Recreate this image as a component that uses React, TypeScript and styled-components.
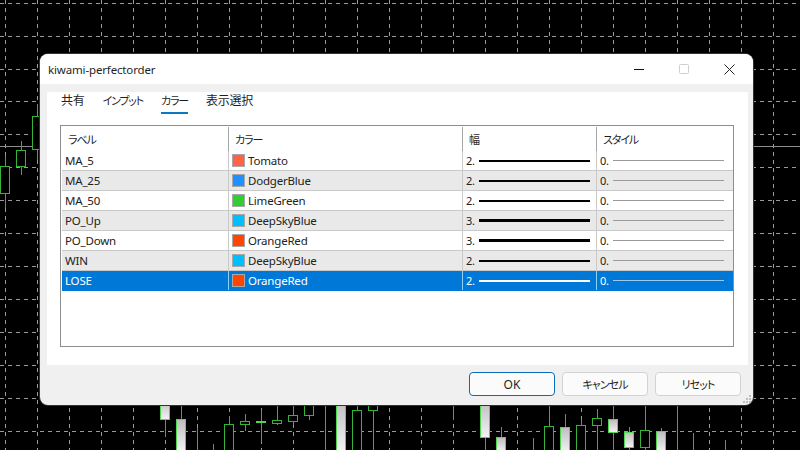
import {FC} from 'react';
import styled, {createGlobalStyle} from 'styled-components';

const GlobalStyle = createGlobalStyle`
  html, body {
    margin: 0;
    padding: 0;
    width: 800px;
    height: 450px;
    overflow: hidden;
    background: #000;
    font-family: "Noto Sans", "Noto Sans CJK JP", sans-serif;
    font-size: 12px;
    color: #1f1f1f;
  }
`;

const Screen = styled.div`
  position: relative;
  width: 800px;
  height: 450px;
  background: #000;
  overflow: hidden;
`;

const ChartSvg = styled.svg`
  position: absolute;
  left: 0;
  top: 0;
`;

const Dialog = styled.div`
  position: absolute;
  left: 40px;
  top: 54px;
  width: 713px;
  height: 351px;
  display: flex;
  flex-direction: column;
  background: #f0f0f0;
  border-radius: 8px;
  overflow: hidden;
  box-shadow: 0 0 0 1px #333;
`;

const TitleBar = styled.div`
  height: 30px;
  flex: none;
  display: flex;
  align-items: center;
  justify-content: space-between;
  padding: 0 18px 0 8px;
  background: #fff;
`;

const Title = styled.span`
  font-size: 11.5px;
  letter-spacing: -0.15px;
`;

const WindowControls = styled.div`
  display: flex;
  align-items: center;
  gap: 35px;
`;

const Panel = styled.div`
  flex: none;
  height: 273px;
  margin: 8px 5px 0 7px;
  background: #fff;
  display: flex;
  flex-direction: column;
`;

const Tabs = styled.div`
  display: flex;
  gap: 18px;
  height: 22px;
  margin: 0 0 11px 14px;
`;

const Tab = styled.div<{$active?: boolean; $kana?: boolean}>`
  height: 22px;
  box-sizing: border-box;
  padding-bottom: 2px;
  line-height: 18px;
  font-size: ${p => (p.$kana ? '11px' : '12px')};
  font-feature-settings: "palt";
  letter-spacing: ${p => (p.$kana ? '-1.2px' : '-0.2px')};
  border-bottom: 2px solid ${p => (p.$active ? '#0a78c2' : 'transparent')};
`;

const Table = styled.div`
  box-sizing: border-box;
  width: 674px;
  height: 222px;
  margin-left: 13px;
  border: 1px solid #8e8e8e;
  padding-top: 1px;
`;

const Row = styled.div<{$alt?: boolean; $selected?: boolean}>`
  display: grid;
  grid-template-columns: 167px 234px 134px 137px;
  height: 20px;
  box-sizing: border-box;
  border-bottom: 1px solid ${p => (p.$selected ? '#0078d7' : '#c9c9c9')};
  margin-left: 1px;
  background: ${p => (p.$selected ? '#0078d7' : p.$alt ? '#e9e9e9' : '#fff')};
  color: ${p => (p.$selected ? '#fff' : '#222')};
`;

const HeaderRow = styled.div`
  display: grid;
  grid-template-columns: 167px 234px 134px 137px;
  height: 24px;
  margin-left: 1px;
`;

const HeaderCell = styled.div<{$first?: boolean}>`
  display: flex;
  align-items: center;
  padding-left: 6px;
  border-left: ${p => (p.$first ? 'none' : '1px solid #a6a6a6')};
  margin-left: ${p => (p.$first ? '0' : '-1px')};
  font-size: 11px;
  font-feature-settings: "palt";
  letter-spacing: -1.1px;
`;

const Cell = styled.div<{$first?: boolean; $selected?: boolean}>`
  display: flex;
  align-items: center;
  gap: 3px;
  min-width: 0;
  margin-left: ${p => (p.$first ? '0' : '-1px')};
  padding-left: 3px;
  border-left: ${p =>
    p.$first ? 'none' : p.$selected ? '1px solid #8fd0f5' : '1px solid #c9c9c9'};
  font-size: 11.5px;
  letter-spacing: -0.2px;
  white-space: nowrap;
`;

const Swatch = styled.span<{$color: string}>`
  width: 13px;
  height: 13px;
  box-sizing: border-box;
  flex: none;
  background: ${p => p.$color};
  border: 1px solid #a8a8a8;
`;

const LineValue = styled.span`
  width: 10px;
  flex: none;
  font-size: 11px;
`;

const LineSample = styled.span<{$weight: number; $color: string}>`
  width: 111px;
  height: ${p => p.$weight}px;
  background: ${p => p.$color};
`;

const Footer = styled.div`
  flex: 1;
  display: flex;
  justify-content: flex-end;
  align-items: flex-start;
  gap: 7px;
  padding: 7px 12px 0 0;
  position: relative;
`;

const Button = styled.div<{$primary?: boolean}>`
  width: 86px;
  height: 24px;
  box-sizing: border-box;
  display: flex;
  align-items: center;
  justify-content: center;
  background: #fbfbfb;
  border: 1px solid ${p => (p.$primary ? '#0a6cb8' : '#d2d2d2')};
  border-radius: 4px;
  font-size: ${p => (p.$primary ? '12px' : '11px')};
  font-feature-settings: "palt";
  letter-spacing: ${p => (p.$primary ? '0' : '-0.9px')};
`;

const Grip = styled.svg`
  position: absolute;
  right: 1px;
  bottom: 1px;
`;

const colors = {
  tomato: '#ff6347',
  dodger: '#1e90ff',
  lime: '#32cd32',
  sky: '#00bfff',
  orange: '#ff4500'
};

const rows = [
  {label: 'MA_5', color: colors.tomato, name: 'Tomato', width: 2},
  {label: 'MA_25', color: colors.dodger, name: 'DodgerBlue', width: 2},
  {label: 'MA_50', color: colors.lime, name: 'LimeGreen', width: 2},
  {label: 'PO_Up', color: colors.sky, name: 'DeepSkyBlue', width: 3},
  {label: 'PO_Down', color: colors.orange, name: 'OrangeRed', width: 3},
  {label: 'WIN', color: colors.sky, name: 'DeepSkyBlue', width: 2},
  {label: 'LOSE', color: colors.orange, name: 'OrangeRed', width: 2}
];

const tabs = [
  {text: '共有'},
  {text: 'インプット', kana: true},
  {text: 'カラー', kana: true, active: true},
  {text: '表示選択'}
];
const headers = ['ラベル', 'カラー', '幅', 'スタイル'];

// x, body top, body bottom, wick top, wick bottom, filled
type Candle = [number, number, number, number, number, boolean];

const candles: Candle[] = [
  [5, 166, 193, 156, 208, false],
  [21, 150, 166, 141, 175, false],
  [37, 116, 149, 104, 160, false],
  [165, 400, 419, 400, 437, true],
  [181, 419, 452, 400, 452, true],
  [229, 424, 452, 416, 452, false],
  [245, 421, 424, 414, 431, false],
  [261, 421, 422, 410, 442, true],
  [277, 420, 423, 400, 425, false],
  [293, 415, 421, 400, 425, false],
  [309, 400, 415, 400, 420, false],
  [341, 400, 452, 400, 452, true],
  [357, 410, 452, 400, 452, false],
  [373, 400, 410, 400, 452, false],
  [485, 400, 437, 400, 450, true],
  [501, 437, 452, 427, 452, true],
  [549, 426, 452, 400, 452, false],
  [565, 427, 452, 414, 452, true],
  [581, 425, 452, 420, 452, false],
  [597, 418, 425, 409, 452, false],
  [613, 419, 432, 400, 452, true],
  [629, 432, 447, 427, 452, true],
  [645, 430, 447, 400, 452, false],
  [661, 431, 452, 428, 452, true]
];

const wicks: [number, number, number][] = [
  [197, 428, 450],
  [213, 444, 450],
  [325, 400, 450],
  [453, 400, 420],
  [533, 438, 450],
  [677, 400, 450],
  [693, 433, 450],
  [725, 440, 450]
];

const gridX = Array.from({length: 25}, (_, i) => 5 + i * 32);
const gridY = [3, 36, 69, 101, 134, 167, 200, 233, 266, 299, 332, 365, 398, 431];

const Chart: FC = () => (
  <ChartSvg width={800} height={450} viewBox="0 0 800 450">
    <defs>
      <linearGradient id="fill" x1="0" y1="0" x2="0" y2="1">
        <stop offset="0" stopColor="#bdbdbd" />
        <stop offset="1" stopColor="#f4f4f4" />
      </linearGradient>
    </defs>
    {gridX.map(x => (
      <line key={x} x1={x + 0.5} y1={0} x2={x + 0.5} y2={450} stroke="#9a9a9a" strokeDasharray="4 4" />
    ))}
    {gridY.map(y => (
      <line key={y} x1={0} y1={y + 0.5} x2={800} y2={y + 0.5} stroke="#9a9a9a" strokeDasharray="4 4" />
    ))}
    <line x1={0} y1={146.5} x2={800} y2={146.5} stroke="#8c8c8c" />
    {wicks.map(([x, a, b]) => (
      <line key={x} x1={x + 0.5} y1={a} x2={x + 0.5} y2={b} stroke="#35b535" />
    ))}
    {candles.map(([x, top, bottom, wickTop, wickBottom, filled]) => (
      <g key={x}>
        <line x1={x + 0.5} y1={wickTop} x2={x + 0.5} y2={wickBottom} stroke="#35b535" />
        <rect
          x={x - 4.5}
          y={top + 0.5}
          width={9}
          height={bottom - top}
          fill={filled ? 'url(#fill)' : '#000'}
          stroke={filled ? '#4fd84f' : '#35b535'}
        />
      </g>
    ))}
  </ChartSvg>
);

const App: FC = () => (
  <Screen>
    <GlobalStyle />
    <Chart />
    <Dialog>
      <TitleBar>
        <Title>kiwami-perfectorder</Title>
        <WindowControls>
          <svg width={10} height={10} viewBox="0 0 10 10">
            <line x1={0} y1={5.5} x2={10} y2={5.5} stroke="#111" />
          </svg>
          <svg width={10} height={10} viewBox="0 0 10 10">
            <rect x={0.5} y={0.5} width={9} height={9} rx={1} fill="none" stroke="#cfcfcf" />
          </svg>
          <svg width={11} height={11} viewBox="0 0 11 11">
            <path d="M0.5 0.5L10.5 10.5M10.5 0.5L0.5 10.5" stroke="#222" fill="none" />
          </svg>
        </WindowControls>
      </TitleBar>
      <Panel>
        <Tabs>
          {tabs.map(tab => (
            <Tab key={tab.text} $active={tab.active} $kana={tab.kana}>
              {tab.text}
            </Tab>
          ))}
        </Tabs>
        <Table>
          <HeaderRow>
            {headers.map((header, i) => (
              <HeaderCell key={header} $first={i === 0}>
                {header}
              </HeaderCell>
            ))}
          </HeaderRow>
          {rows.map((row, i) => {
            const selected = row.label === 'LOSE';
            return (
              <Row key={row.label} $alt={i % 2 === 1} $selected={selected}>
                <Cell $first>{row.label}</Cell>
                <Cell $selected={selected}>
                  <Swatch $color={row.color} />
                  {row.name}
                </Cell>
                <Cell $selected={selected}>
                  <LineValue>{row.width}.</LineValue>
                  <LineSample $weight={row.width} $color={selected ? '#fff' : '#000'} />
                </Cell>
                <Cell $selected={selected}>
                  <LineValue>0.</LineValue>
                  <LineSample $weight={1} $color={selected ? '#9cc9ec' : '#9a9a9a'} />
                </Cell>
              </Row>
            );
          })}
        </Table>
      </Panel>
      <Footer>
        <Button $primary>OK</Button>
        <Button>キャンセル</Button>
        <Button>リセット</Button>
        <Grip width={10} height={10} viewBox="0 0 10 10">
          <path d="M7 1h2v2H7zM4 4h2v2H4zM7 4h2v2H7zM1 7h2v2H1zM4 7h2v2H4zM7 7h2v2H7z" fill="#bdbdbd" />
        </Grip>
      </Footer>
    </Dialog>
  </Screen>
);

export default App;
